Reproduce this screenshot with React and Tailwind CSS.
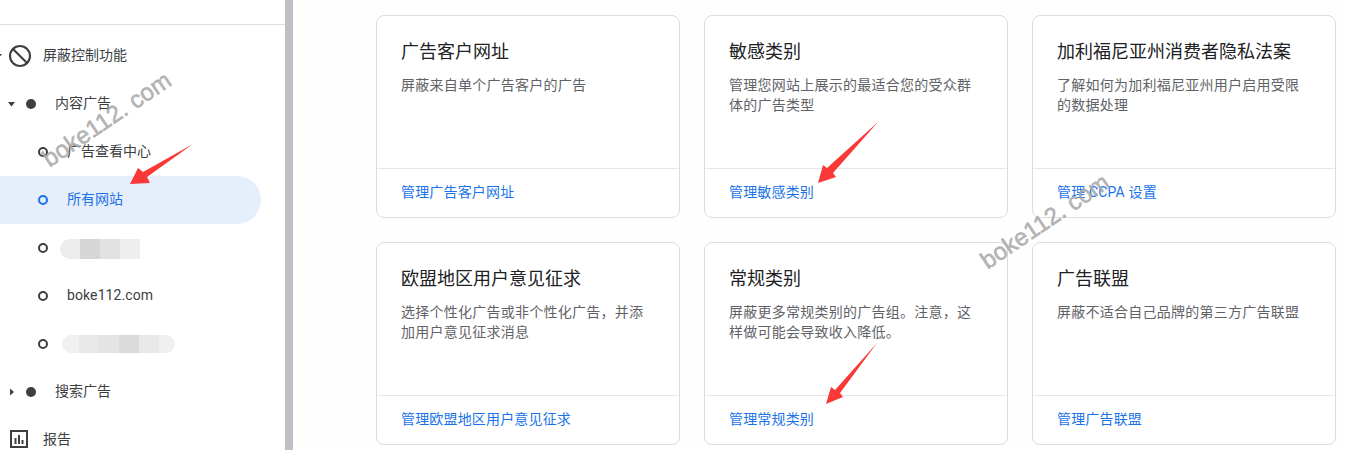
import React from "react";
import { Ban } from "lucide-react";

const FONT = { fontFamily: '"Roboto", "Noto Sans CJK SC", sans-serif' };

const cards = [
  { title: "广告客户网址", desc: "屏蔽来自单个广告客户的广告", link: "管理广告客户网址" },
  { title: "敏感类别", desc: "管理您网站上展示的最适合您的受众群体的广告类型", link: "管理敏感类别" },
  { title: "加利福尼亚州消费者隐私法案", desc: "了解如何为加利福尼亚州用户启用受限的数据处理", link: "管理 CCPA 设置" },
  { title: "欧盟地区用户意见征求", desc: "选择个性化广告或非个性化广告，并添加用户意见征求消息", link: "管理欧盟地区用户意见征求" },
  { title: "常规类别", desc: "屏蔽更多常规类别的广告组。注意，这样做可能会导致收入降低。", link: "管理常规类别" },
  { title: "广告联盟", desc: "屏蔽不适合自己品牌的第三方广告联盟", link: "管理广告联盟" },
];

const CaretDown = () => (
  <svg width="8" height="5" viewBox="0 0 8 5" className="shrink-0">
    <path d="M0 0h7L3.5 4.5z" fill="#3c4043" />
  </svg>
);

const CaretRight = () => (
  <svg width="5" height="8" viewBox="0 0 5 8" className="shrink-0 mr-[1px]">
    <path d="M0 0.5v7L4 4z" fill="#3c4043" />
  </svg>
);

const Dot = () => <span className="ml-[10px] w-[10px] h-[10px] rounded-full bg-[#3c4043] shrink-0" />;

const Ring = ({ active }) => (
  <span
    className={
      active
        ? "w-[10px] h-[10px] rounded-full border-2 border-[#1a73e8] shrink-0"
        : "w-[10px] h-[10px] rounded-full border-2 border-[#3c4043] shrink-0"
    }
  />
);

const Mosaic = ({ cells, className }) => (
  <div className={className}>
    {cells.map((c, i) => (
      <span key={i} className={c} />
    ))}
  </div>
);

const SubItem = ({ active, children }) => (
  <div
    className={
      active
        ? "h-12 flex items-center pl-[38px] w-[261px] rounded-r-full bg-[#e6edfb] text-[#1a73e8]"
        : "h-12 flex items-center pl-[38px] text-[#3c4043]"
    }
  >
    <Ring active={active} />
    {children}
  </div>
);

const Sidebar = () => (
  <aside className="w-[285px] shrink-0 bg-white text-sm overflow-hidden">
    <div className="h-[25px] border-b border-[#dadce0]" />
    <div className="pt-[7px]">
      <div className="h-12 flex items-center text-[#3c4043]">
        <div className="-ml-[5px]">
          <CaretDown />
        </div>
        <Ban size={24} strokeWidth={2.1} color="#3c4043" className="ml-[5px] shrink-0" />
        <span className="ml-[11px] -mt-[2px]">屏蔽控制功能</span>
      </div>
      <div className="h-12 flex items-center pl-2 text-[#3c4043]">
        <CaretDown />
        <Dot />
        <span className="ml-[19px] -mt-[2px]">内容广告</span>
      </div>
      <SubItem>
        <span className="ml-[19px] -mt-[2px]">广告查看中心</span>
      </SubItem>
      <SubItem active>
        <span className="ml-[19px] -mt-[2px]">所有网站</span>
      </SubItem>
      <SubItem>
        <Mosaic
          className="ml-[12px] flex h-[20px] mt-[2px]"
          cells={[
            "w-[20px] rounded-l-xl bg-[#ececec]",
            "w-[20px] bg-[#d6d6d6]",
            "w-[20px] bg-[#e2e2e2]",
            "w-[20px] bg-[#eeeeee]",
          ]}
        />
      </SubItem>
      <SubItem>
        <span className="ml-[19px] -mt-[2px] tracking-[0.1px]">boke112.com</span>
      </SubItem>
      <SubItem>
        <Mosaic
          className="ml-[14px] flex h-[18px] -mt-[1px]"
          cells={[
            "w-[17px] rounded-l-xl bg-[#f0f0f0]",
            "w-[20px] bg-[#e8e8e8]",
            "w-[20px] bg-[#e4e4e4]",
            "w-[20px] bg-[#dadada]",
            "w-[20px] bg-[#e8e8e8]",
            "w-[16px] rounded-r-xl bg-[#f0f0f0]",
          ]}
        />
      </SubItem>
      <div className="h-12 flex items-center pl-[10px] text-[#3c4043]">
        <CaretRight />
        <Dot />
        <span className="ml-[19px] -mt-[2px]">搜索广告</span>
      </div>
      <div className="h-12 flex items-center pl-[10px] text-[#3c4043]">
        <svg width="18" height="18" viewBox="0 0 18 18" className="shrink-0 -mt-[2px]">
          <rect x="1" y="1" width="16" height="16" fill="none" stroke="#3c4043" strokeWidth="2" />
          <path d="M4.5 8h2v6h-2zM8 5h2v9H8zM11.5 10h2v4h-2z" fill="#3c4043" />
        </svg>
        <span className="ml-[15px] -mt-[2px]">报告</span>
      </div>
    </div>
  </aside>
);

const Card = ({ title, desc, link }) => (
  <div className="flex flex-col border border-[#dadce0] rounded-lg bg-white">
    <div className="flex-1 px-6 pt-[22px]">
      <h2 className="text-lg leading-[28px] text-[#202124]">{title}</h2>
      <p className="mt-[9px] text-sm leading-5 tracking-[0.25px] text-[#5f6368]">{desc}</p>
    </div>
    <div className="h-[49px] shrink-0 border-t border-[#e4e6e9] px-6 pb-[3px] flex items-center text-sm tracking-[0.17px] text-[#1a73e8]">
      {link}
    </div>
  </div>
);

const Arrow = ({ points }) => (
  <polygon points={points} fill="#fb3838" />
);

const Watermark = ({ className }) => (
  <span
    className={
      "absolute font-['Liberation_Sans'] text-2xl leading-none whitespace-nowrap text-[#a9a9a9]/85 [-webkit-text-stroke:0.5px_#a9a9a9] -rotate-[34deg] origin-left " +
      className
    }
  >
    boke112. com
  </span>
);

export default function App() {
  return (
    <div className="relative w-[1346px] h-[450px] overflow-hidden flex bg-white" style={FONT}>
      <Sidebar />
      <div className="w-2 shrink-0 bg-[#bdc1c6]" />
      <main className="flex-1 pl-[83px] pt-[15px] bg-[#fefefe]">
        <div className="grid grid-cols-[304px_304px_304px] auto-rows-[203px] gap-6">
          {cards.map((c) => (
            <Card key={c.title} {...c} />
          ))}
        </div>
      </main>

      {/* annotations pasted over the screenshot */}
      <Watermark className="left-[45px] top-[149px]" />
      <Watermark className="left-[983px] top-[251px]" />
      <svg width="1346" height="450" className="absolute inset-0 pointer-events-none">
        <Arrow points="193,144 147,177 150,183 130,184 138,168 143,172" />
        <Arrow points="878,122 833,173 836,177 818,183 823,165 827,168" />
        <Arrow points="877,343 840,393 843,397 826,404 831,387 835,390" />
      </svg>
    </div>
  );
}
